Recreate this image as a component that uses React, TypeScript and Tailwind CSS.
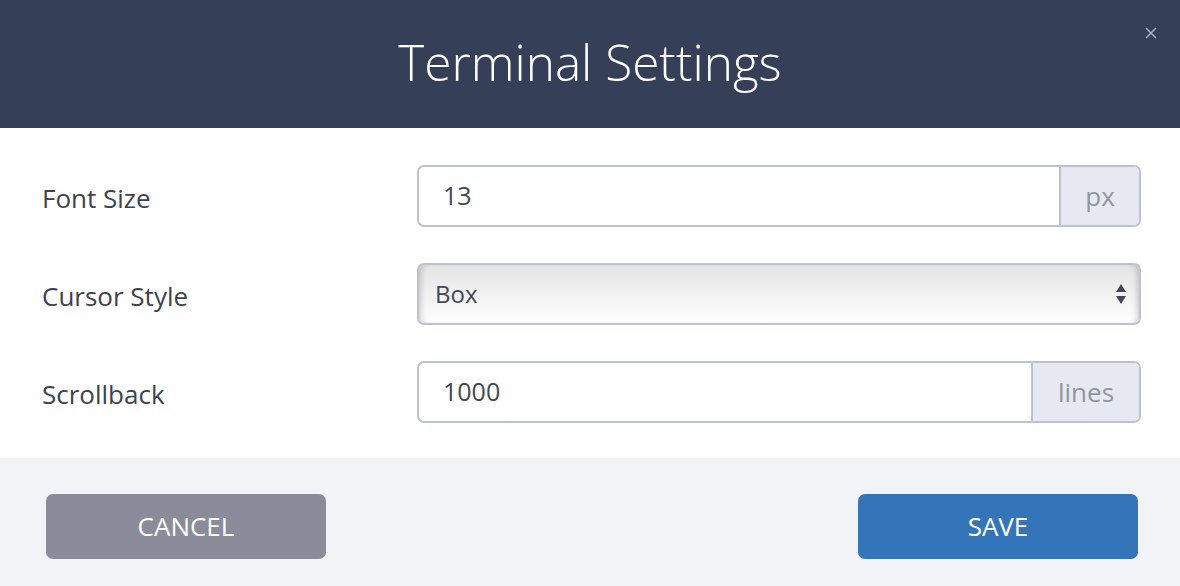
import { X } from "lucide-react";

const font = { fontFamily: '"Open Sans", "Liberation Sans", sans-serif' };

const Label = ({ children }: { children: string }) => (
  <div className="w-[375px] shrink-0 pt-[4px] text-[26px] text-[#3c4251]">{children}</div>
);

const AddonInput = ({ value, unit, addonWidth }: { value: string; unit: string; addonWidth: string }) => (
  <div className="flex h-[62px] flex-1 overflow-hidden rounded-[7px] border-2 border-[#bcc2d0] bg-white">
    <div className="flex flex-1 items-center pl-[24px] text-[25px] text-[#414756]">{value}</div>
    <div
      className={`flex ${addonWidth} items-center justify-center border-l-2 border-[#bcc2d0] bg-[#e6e9f1] text-[26px] text-[#8f95a3]`}
    >
      {unit}
    </div>
  </div>
);

export default function App() {
  return (
    <div className="flex h-[586px] w-[1180px] flex-col bg-white" style={font}>
      {/* Header */}
      <div className="relative flex h-[128px] items-center justify-center bg-[#353f58]">
        <h1 className="pb-[4px] text-[49.5px] font-light text-white">Terminal Settings</h1>
        <button className="absolute right-[20px] top-[24px] text-[#aab2c6]">
          <X className="h-[18px] w-[18px]" strokeWidth={2} />
        </button>
      </div>

      {/* Body */}
      <div className="flex h-[330px] flex-col gap-[36px] pl-[42px] pr-[39px] pt-[37px]">
        <div className="flex items-center">
          <Label>Font Size</Label>
          <AddonInput value="13" unit="px" addonWidth="w-[80px]" />
        </div>
        <div className="flex items-center">
          <Label>Cursor Style</Label>
          <div className="relative flex h-[62px] flex-1 items-center rounded-[7px] border-2 border-[#bcc2d0] bg-gradient-to-b from-[#e4e4e4] to-white pl-[16px] text-[24px] text-[#414756] shadow-[inset_6px_0_6px_-4px_rgba(0,0,0,0.18),inset_-6px_0_6px_-4px_rgba(0,0,0,0.18)]">
            Box
            <svg className="absolute right-[12px] top-1/2 -translate-y-1/2" width="12" height="22" viewBox="0 0 12 22">
              <path d="M6 1 L11 9 L1 9 Z" fill="#414756" />
              <path d="M1 13 L11 13 L6 21 Z" fill="#414756" />
            </svg>
          </div>
        </div>
        <div className="flex items-center">
          <Label>Scrollback</Label>
          <AddonInput value="1000" unit="lines" addonWidth="w-[108px]" />
        </div>
      </div>

      {/* Footer */}
      <div className="flex flex-1 items-start justify-between bg-[#f2f3f7] pl-[46px] pr-[42px] pt-[36px]">
        <button className="flex h-[65px] w-[280px] items-center justify-center rounded-[7px] bg-[#8a8d99] text-[26px] text-white">
          CANCEL
        </button>
        <button className="flex h-[65px] w-[280px] items-center justify-center rounded-[7px] bg-[#3375b8] text-[26px] text-white">
          SAVE
        </button>
      </div>
    </div>
  );
}
